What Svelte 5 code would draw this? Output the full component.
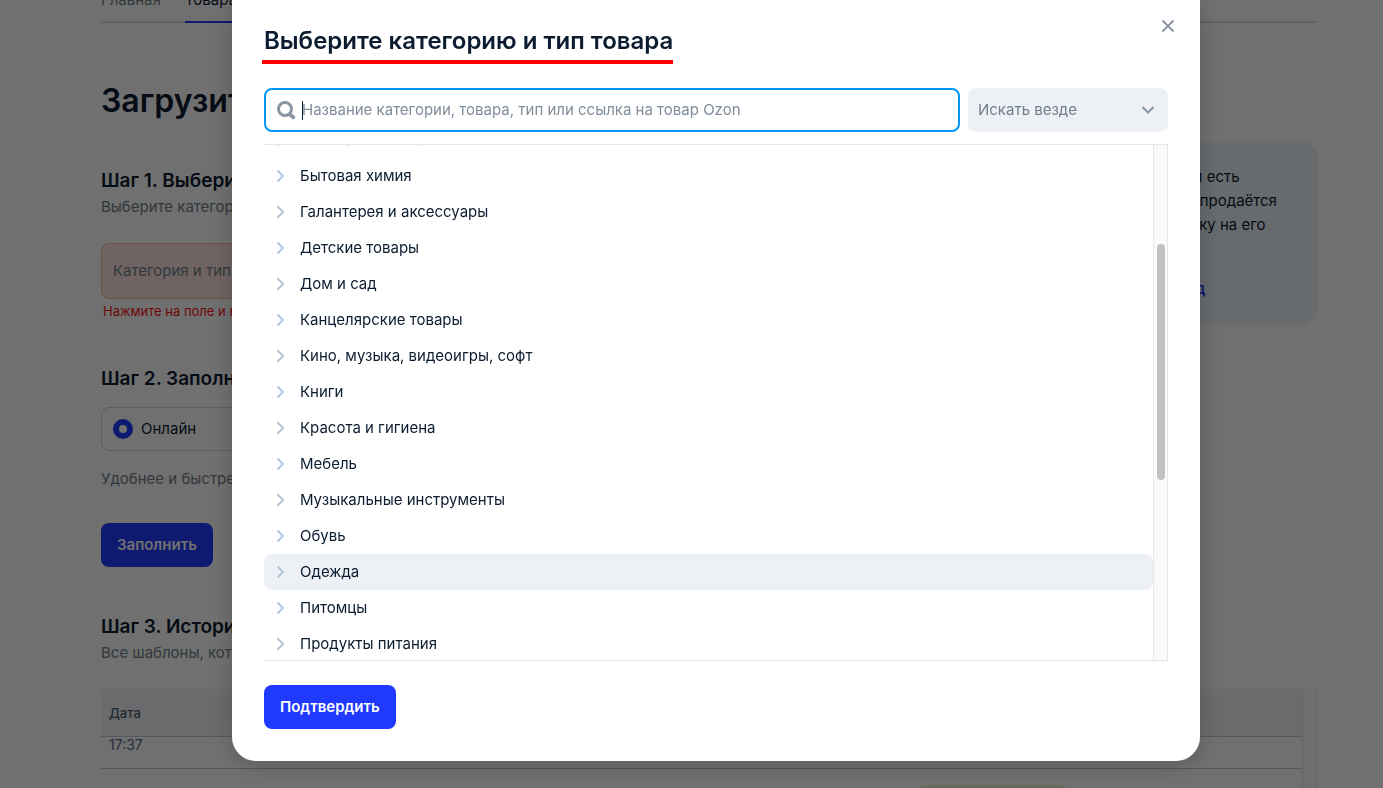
<script lang="ts">
  const categories = [
    "Бытовая техника",
    "Бытовая химия",
    "Галантерея и аксессуары",
    "Детские товары",
    "Дом и сад",
    "Канцелярские товары",
    "Кино, музыка, видеоигры, софт",
    "Книги",
    "Красота и гигиена",
    "Мебель",
    "Музыкальные инструменты",
    "Обувь",
    "Одежда",
    "Питомцы",
    "Продукты питания",
  ];

  let active = $state("Одежда");
  let query = $state("");
  let scope = $state("all");
  let fillMode = $state("online");
  let open = $state(true);
</script>

<div class="page">
  <nav class="tabs">
    <a class="tabs__item" href="#main">Главная</a>
    <a class="tabs__item tabs__item--active" href="#goods">Товары</a>
  </nav>

  <div class="columns">
    <main class="steps">
      <h1>Загрузить товары через шаблон</h1>

      <h2>Шаг 1. Выберите категорию</h2>
      <p class="hint">Выберите категорию и тип товара</p>
      <button class="field" onclick={() => (open = true)}>Категория и тип товара</button>
      <p class="error">Нажмите на поле и выберите категорию</p>

      <h2 class="step-title">Шаг 2. Заполните шаблон</h2>
      <label class="radio">
        <input type="radio" name="mode" value="online" bind:group={fillMode} />
        Онлайн
      </label>
      <p class="hint hint--mode">Удобнее и быстрее</p>
      <button class="btn">Заполнить</button>
    </main>

    <aside class="info">
      <p>
        Если у вас в магазине уже и есть<br />
        такой товар и он уже везде продаётся<br />
        на Ozon, просто дайте ссылку на его
      </p>
      <a class="info__link" href="#copy">Посмотреть, как ввести код</a>
    </aside>
  </div>

  <section class="history">
    <h2>Шаг 3. История загрузок</h2>
    <p class="hint">Все шаблоны, которые вы загрузили</p>
    <div class="history__scroll">
      <table>
        <thead>
          <tr><th class="date">Дата</th><th>Статус</th></tr>
        </thead>
        <tbody>
          <tr><td class="time">17:37</td><td></td></tr>
          <tr><td></td><td class="status"><span class="badge"></span></td></tr>
        </tbody>
      </table>
      <div class="history__bar"></div>
    </div>
  </section>
</div>

{#if open}
  <div class="overlay">
    <div class="modal" role="dialog" aria-modal="true" aria-labelledby="modal-title">
      <header class="modal__head">
        <h2 id="modal-title" class="modal__title">Выберите категорию и тип товара</h2>
        <button class="close" aria-label="Закрыть" onclick={() => (open = false)}>
          <svg width="16" height="16" viewBox="0 0 16 16"><path d="M2.5 2.5l11 11M13.5 2.5l-11 11" /></svg>
        </button>
      </header>

      <div class="filters">
        <label class="search">
          <svg width="20" height="20" viewBox="0 0 20 20">
            <circle cx="9" cy="9" r="6.5" />
            <path d="M14 14.5l3.2 2.7" />
          </svg>
          <span class="search__caret"></span>
          <input
            type="text"
            aria-label="Поиск категории"
            placeholder="Название категории, товара, тип или ссылка на товар Ozon"
            bind:value={query}
          />
        </label>
        <div class="select">
          <select aria-label="Где искать" bind:value={scope}>
            <option value="all">Искать везде</option>
          </select>
          <svg width="16" height="16" viewBox="0 0 16 16"><path d="M2.5 5l5.5 5.5L13.5 5" /></svg>
        </div>
      </div>

      <div class="tree">
        <ul class="tree__list">
          {#each categories as name}
            <li>
              <button class="row" class:row--active={name === active} onclick={() => (active = name)}>
                <svg width="12" height="16" viewBox="0 0 12 16"><path d="M3.5 2.5L9 8l-5.5 5.5" /></svg>
                {name}
              </button>
            </li>
          {/each}
        </ul>
        <div class="tree__track"><div class="tree__thumb"></div></div>
      </div>

      <button class="btn" onclick={() => (open = false)}>Подтвердить</button>
    </div>
  </div>
{/if}

<style>
  :global(body) {
    margin: 0;
    background: #fff;
    font-family: Inter, "Liberation Sans", sans-serif;
    font-size: 15px;
    line-height: 24px;
    color: #0c1c30;
    overflow: hidden;
  }

  h1, h2, p, ul {
    margin: 0;
  }

  button, input, select {
    font: inherit;
    color: inherit;
    box-sizing: border-box;
    border: 0;
    cursor: pointer;
  }

  .page {
    height: 100vh;
    overflow: hidden;
    padding: 0 66px 0 101px;
  }

  .tabs {
    display: flex;
    align-items: flex-end;
    gap: 24px;
    height: 21px;
    border-bottom: 2px solid #dcdde8;
  }

  .tabs__item {
    padding-bottom: 9px;
    margin-bottom: -2px;
    border-bottom: 2px solid transparent;
    color: #707f8d;
    text-decoration: none;
  }

  .tabs__item--active {
    color: #0c1c30;
    border-color: #2039ff;
  }

  .columns {
    display: flex;
    justify-content: space-between;
    align-items: flex-start;
  }

  .steps {
    width: 800px;
    padding-top: 58px;
  }

  h1 {
    font-size: 32px;
    line-height: 40px;
    font-weight: 600;
    margin-bottom: 46px;
  }

  h2 {
    font-size: 19px;
    line-height: 28px;
    font-weight: 600;
  }

  .hint {
    color: #707f8d;
  }

  .field {
    display: block;
    width: 100%;
    height: 56px;
    margin-top: 24px;
    padding: 0 11px;
    text-align: left;
    color: #707f8d;
    background: #fce3df;
    border: 1px solid #f4b8b2;
    border-radius: 8px;
  }

  .error {
    margin-top: 4px;
    padding-left: 2px;
    font-size: 13px;
    line-height: 16px;
    color: #f91111;
  }

  .step-title {
    margin-top: 46px;
  }

  .radio {
    display: flex;
    align-items: center;
    gap: 8px;
    box-sizing: border-box;
    width: 240px;
    height: 44px;
    margin-top: 14px;
    padding: 0 11px;
    border: 1px solid #cfd6dd;
    border-radius: 8px;
  }

  .radio input {
    appearance: none;
    width: 20px;
    height: 20px;
    margin: 0;
    border-radius: 50%;
    border: 6px solid #2039ff;
    background: #fff;
  }

  .hint--mode {
    margin: 16px 0 32px;
  }

  .btn {
    height: 44px;
    padding: 0 16px;
    border-radius: 8px;
    background: #2039ff;
    color: #fff;
    font-weight: 600;
  }

  .info {
    box-sizing: border-box;
    width: 348px;
    height: 184px;
    margin-top: 118px;
    padding: 24px;
    border-radius: 16px;
    background: #eaf3fa;
    white-space: nowrap;
  }

  .info__link {
    display: block;
    margin-top: 40px;
    color: #2039ff;
    font-weight: 600;
    text-decoration: none;
  }

  .history {
    padding-top: 46px;
  }

  .history__scroll {
    display: flex;
    margin-top: 24px;
  }

  table {
    flex: 1;
    border-collapse: collapse;
    font-size: 13px;
    line-height: 16px;
  }

  th {
    height: 47px;
    padding: 0 8px;
    text-align: left;
    font-weight: 500;
    color: #4d5f71;
    background: #f3f3fa;
    border-bottom: 1px solid #bfccdc;
  }

  td {
    height: 31px;
    padding: 0 8px;
    vertical-align: top;
    color: #5c6b7a;
    border-bottom: 1px solid #bfccdc;
  }

  .date {
    width: 67%;
  }

  .time {
    font-size: 14px;
  }

  .status {
    padding: 16px 12px 0;
  }

  .badge {
    display: block;
    width: 150px;
    height: 24px;
    border-radius: 8px;
    background: #f6ecc8;
  }

  .history__bar {
    width: 13px;
    background: #fafafa;
    border: solid #e8e8e8;
    border-width: 0 1px;
  }

  .overlay {
    position: fixed;
    inset: 0;
    display: flex;
    justify-content: center;
    align-items: flex-start;
    padding-left: 49px;
    background: rgba(0, 0, 0, 0.56);
  }

  .modal {
    box-sizing: border-box;
    width: 100%;
    max-width: 968px;
    padding: 0 32px 32px;
    background: #fff;
    border-radius: 0 0 24px 24px;
    box-shadow: 0 4px 24px rgba(0, 0, 0, 0.2);
  }

  .modal__head {
    display: flex;
    justify-content: space-between;
    align-items: flex-start;
    padding-top: 18px;
    margin-bottom: 24px;
  }

  .modal__title {
    padding-top: 4px;
    font-size: 24px;
    line-height: 38px;
    margin-left: -2px;
    border-bottom: 4px solid #f00;
    text-indent: 2px;
  }

  .close {
    display: flex;
    padding: 0;
    margin-right: -8px;
    background: none;
  }

  svg {
    flex: none;
    fill: none;
    stroke: #8a96a3;
    stroke-width: 2;
  }

  .filters {
    display: flex;
    gap: 8px;
    margin-bottom: 12px;
  }

  .search {
    flex: 1;
    display: flex;
    align-items: center;
    box-sizing: border-box;
    height: 44px;
    padding: 0 10px;
    border: 2px solid #0096ff;
    border-radius: 8px;
  }

  .search svg {
    stroke-width: 3;
    stroke-linecap: round;
  }

  .search path {
    stroke-width: 4;
  }

  .search__caret {
    width: 1px;
    height: 19px;
    margin-left: 6px;
    background: #0c1c30;
  }

  .search input {
    flex: 1;
    min-width: 0;
    padding: 0;
    margin-left: -1px;
    background: none;
    outline: none;
  }

  .search input::placeholder {
    color: #808d9a;
    opacity: 1;
  }

  .select {
    position: relative;
    width: 200px;
  }

  .select select {
    appearance: none;
    width: 100%;
    height: 44px;
    padding: 0 40px 0 10px;
    border-radius: 8px;
    background: #edf1f6;
    color: #707f8d;
  }

  .select svg {
    position: absolute;
    right: 12px;
    top: 14px;
    pointer-events: none;
  }

  .tree {
    display: flex;
    height: 515px;
    margin-bottom: 24px;
    border-top: 1px solid #e1e8f0;
    border-bottom: 1px solid #e1e8f0;
    overflow: hidden;
  }

  .tree__list {
    flex: 1;
    display: flex;
    flex-direction: column;
    justify-content: flex-end;
    padding: 0;
    margin-bottom: -2px;
    list-style: none;
  }

  .row {
    display: flex;
    align-items: center;
    gap: 14px;
    width: 100%;
    height: 36px;
    padding: 0 10px;
    border-radius: 8px;
    background: none;
    text-align: left;
  }

  .row svg {
    stroke: #b3c6d9;
  }

  .row--active {
    background: #edf1f6;
  }

  .tree__track {
    box-sizing: border-box;
    width: 15px;
    padding: 99px 0 0 3px;
    background: #fafafa;
    border: solid #e5e7ea;
    border-width: 0 1px;
  }

  .tree__thumb {
    width: 8px;
    height: 236px;
    border-radius: 4px;
    background: #c1c1c1;
  }
</style>
